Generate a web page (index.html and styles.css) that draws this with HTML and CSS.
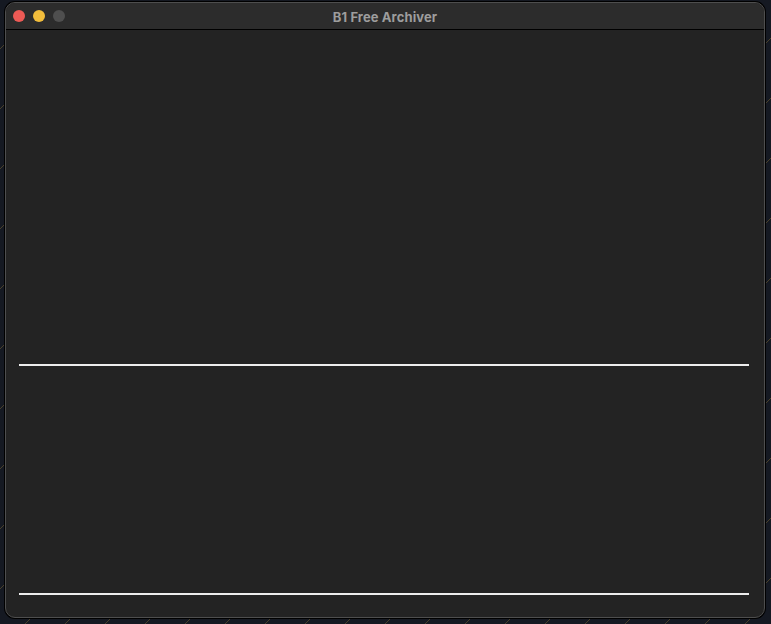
FILE: index.html
```html
<!DOCTYPE html>
<html>
<head>
<meta charset="utf-8">
<title>B1 Free Archiver</title>
<link rel="stylesheet" href="styles.css">
</head>
<body>
<div class="desktop">
  <div class="window">
    <div class="titlebar">
      <div class="lights">
        <span class="light red"></span>
        <span class="light yellow"></span>
        <span class="light gray"></span>
      </div>
      <div class="title">B1 Free Archiver</div>
    </div>
    <div class="content">
      <div class="pane top"></div>
      <div class="rule"></div>
      <div class="pane bottom"></div>
      <div class="rule"></div>
      <div class="footer"></div>
    </div>
  </div>
</div>
</body>
</html>
```

FILE: styles.css
```css
html, body {
  margin: 0;
  padding: 0;
  width: 771px;
  height: 624px;
  overflow: hidden;
}
body {
  background: #151922;
  font-family: "Inter", "Liberation Sans", sans-serif;
}
.desktop {
  box-sizing: border-box;
  width: 771px;
  height: 624px;
  padding: 2px 6px 6px 5px;
  background:
    linear-gradient(135deg, transparent 48%, rgba(170,140,60,0.35) 49%, transparent 50%) 0 0 / 40px 60px,
    #151922;
}
.window {
  box-sizing: border-box;
  height: 616px;
  border-radius: 10px;
  border: 1px solid #4e4e4e;
  background: #232323;
  display: flex;
  flex-direction: column;
  overflow: hidden;
  box-shadow: 0 0 0 1px #000;
}
.titlebar {
  height: 26px;
  flex: none;
  background: #2c2c2c;
  border-bottom: 1px solid #000;
  position: relative;
  display: flex;
  align-items: center;
  justify-content: center;
}
.lights {
  position: absolute;
  left: 7px;
  top: 7px;
  display: flex;
  gap: 8px;
}
.light {
  width: 12px;
  height: 12px;
  border-radius: 50%;
  display: block;
}
.red { background: #ed5a55; }
.yellow { background: #f2bd3b; }
.gray { background: #4f4f4f; }
.title {
  color: #9d9d9d;
  font-size: 13px;
  font-weight: 700;
  letter-spacing: 0.1px;
  padding-top: 1px;
}
.content {
  flex: 1;
  display: flex;
  flex-direction: column;
  padding: 0 15px 0 13px;
}
.pane.top { height: 334px; }
.pane.bottom { height: 227px; }
.rule {
  height: 2px;
  background: #ededed;
}
.footer { flex: 1; }
```
